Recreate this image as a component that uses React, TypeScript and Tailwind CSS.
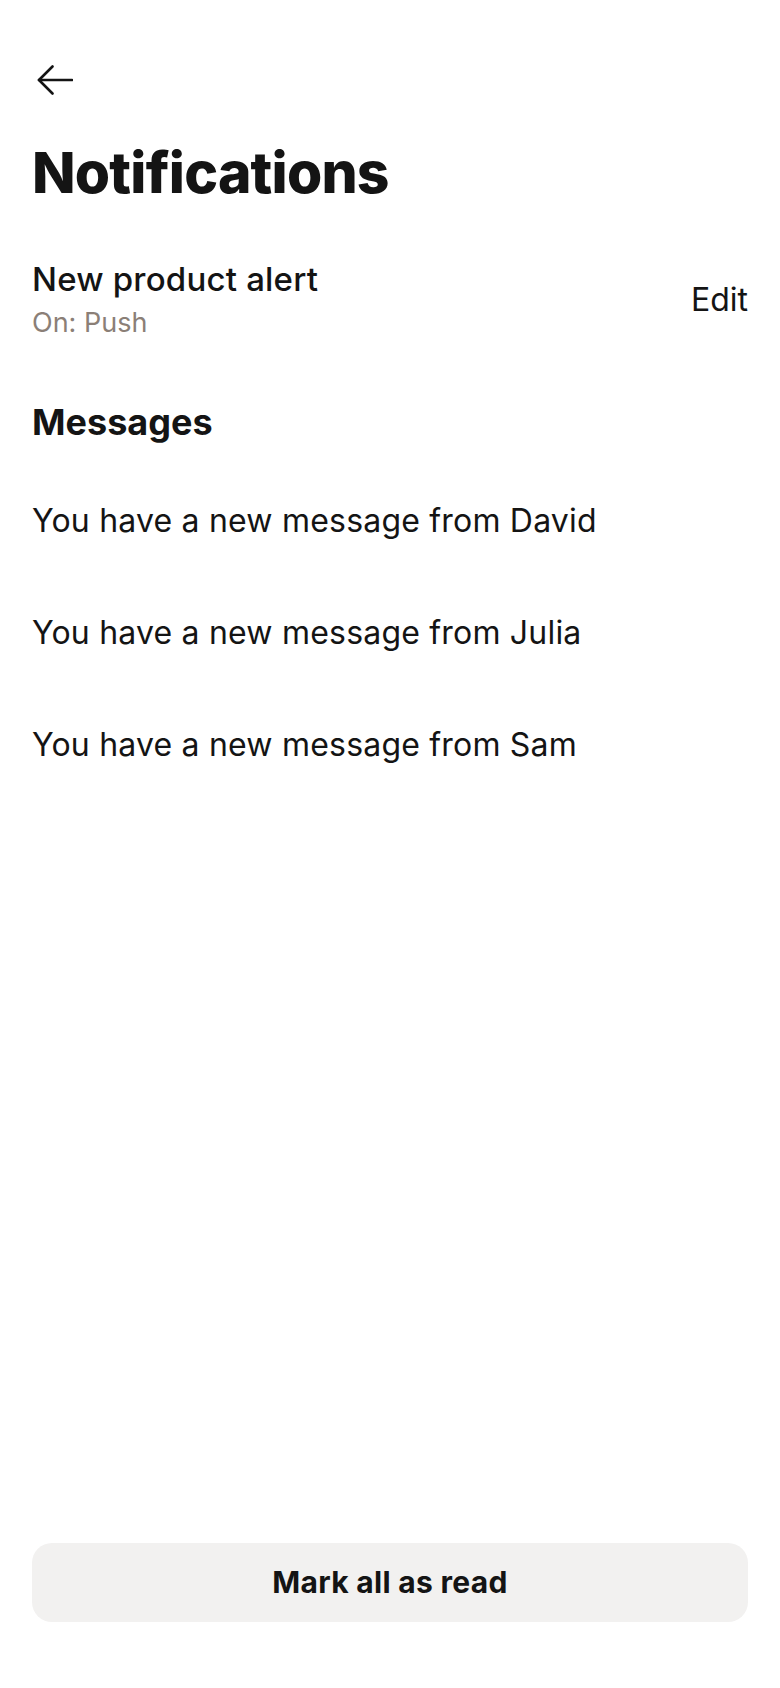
const messages = ["David", "Julia", "Sam"];

const BackArrow = () => (
  <svg width="36" height="30" viewBox="0 0 36 30" fill="none" stroke="currentColor" strokeWidth="2.6" strokeLinecap="round" strokeLinejoin="round">
    <path d="M35 15H2" />
    <path d="M15.5 1.5 2 15l13.5 13.5" />
  </svg>
);

export default function App() {
  return (
    <div className="flex h-[1688px] w-[780px] flex-col bg-white px-8 pt-[65px] pb-[66px] text-[#141414] font-['Inter',sans-serif]">
      <button className="w-fit self-start ml-[5px]">
        <BackArrow />
      </button>

      <h1 className="mt-[44px] text-[57px] leading-[68px] font-extrabold tracking-[-0.8px]">Notifications</h1>

      <div className="mt-[52px] flex items-center justify-between">
        <div className="flex flex-col">
          <span className="text-[33px] leading-[40px] font-medium tracking-[0.2px]">New product alert</span>
          <span className="mt-[7px] text-[27px] leading-[34px] text-[#8b7f77]">On: Push</span>
        </div>
        <button className="text-[32px] leading-[40px]">Edit</button>
      </div>

      <h2 className="mt-[62px] text-[36px] leading-[40px] font-bold">Messages</h2>

      <ul className="mt-[59px] flex flex-col gap-[72px]">
        {messages.map((name) => (
          <li key={name} className="text-[32px] leading-[40px] tracking-[0.2px]">
            You have a new message from {name}
          </li>
        ))}
      </ul>

      <button className="mt-auto h-[79px] w-full rounded-[20px] bg-[#f2f1f0] text-[30px] font-bold tracking-[0.3px]">
        Mark all as read
      </button>
    </div>
  );
}
